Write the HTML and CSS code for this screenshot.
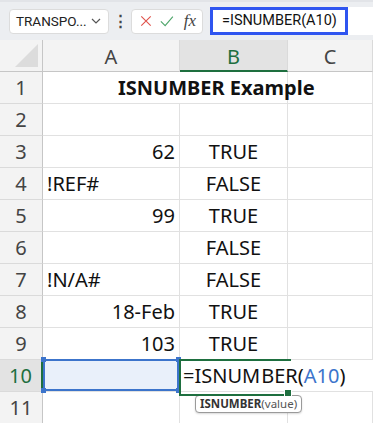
FILE: index.html
```html
<!DOCTYPE html>
<html lang="en">
<head>
  <meta charset="UTF-8" />
  <title>ISNUMBER Example</title>
  <link rel="stylesheet" href="styles.css">
</head>
<body>
  <div class="toolbar">
    <div class="name-box">
      <span>TRANSPO...</span>
      <svg class="chev" width="10" height="6" viewBox="0 0 10 6"><path d="M1 1l4 4 4-4" fill="none" stroke="#555" stroke-width="1.2"/></svg>
    </div>
    <span class="dots">&#8942;</span>
    <div class="fx-box">
      <svg width="14" height="14" viewBox="0 0 14 14"><path d="M1.5 1.5l11 11M12.5 1.5l-11 11" stroke="#e0524b" stroke-width="1.3" fill="none"/></svg>
      <svg width="16" height="14" viewBox="0 0 16 14"><path d="M1 7.5l5 5L15 2" stroke="#4ea56a" stroke-width="1.3" fill="none"/></svg>
      <span class="fx">fx</span>
    </div>
    <div class="formula">=ISNUMBER(A10)</div>
  </div>

  <div class="sheet">
    <div class="corner"><span class="tri"></span></div>
    <div class="col-head">A</div>
    <div class="col-head active">B</div>
    <div class="col-head">C</div>

    <div class="row-head">1</div>
    <div class="cell title">ISNUMBER Example</div>
    <div class="cell"></div>
    <div class="cell"></div>

    <div class="row-head">2</div>
    <div class="cell"></div><div class="cell"></div><div class="cell"></div>

    <div class="row-head">3</div>
    <div class="cell num">62</div><div class="cell mid">TRUE</div><div class="cell"></div>

    <div class="row-head">4</div>
    <div class="cell">!REF#</div><div class="cell mid">FALSE</div><div class="cell"></div>

    <div class="row-head">5</div>
    <div class="cell num">99</div><div class="cell mid">TRUE</div><div class="cell"></div>

    <div class="row-head">6</div>
    <div class="cell"></div><div class="cell mid">FALSE</div><div class="cell"></div>

    <div class="row-head">7</div>
    <div class="cell">!N/A#</div><div class="cell mid">FALSE</div><div class="cell"></div>

    <div class="row-head">8</div>
    <div class="cell num">18-Feb</div><div class="cell mid">TRUE</div><div class="cell"></div>

    <div class="row-head">9</div>
    <div class="cell num">103</div><div class="cell mid">TRUE</div><div class="cell"></div>

    <div class="row-head active">10</div>
    <div class="cell ref">
      <span class="knob tl"></span><span class="knob tr"></span>
      <span class="knob bl"></span><span class="knob br"></span>
    </div>
    <div class="cell editing">=ISNUM<span class="caret"></span>BER(<span class="arg">A10</span>)
      <div class="tip"><b>ISNUMBER</b>(value)</div>
    </div>
    <div class="cell no-left"></div>

    <div class="row-head">11</div>
    <div class="cell"></div><div class="cell"></div><div class="cell"></div>
  </div>
</body>
</html>
```

FILE: styles.css
```css
* { box-sizing: border-box; margin: 0; padding: 0; }
body {
  width: 373px;
  height: 423px;
  overflow: hidden;
  background: #fff;
  font-family: 'Noto Sans', 'Open Sans', Arial, sans-serif;
  color: #111;
}
.toolbar {
  height: 40px;
  background: #eceef1;
  border-top: 2px solid #e2e4e8;
  display: flex;
  align-items: center;
  padding: 0 0 0 9px;
  font-family: Roboto, 'Noto Sans', sans-serif;
}
.toolbar > * { flex-shrink: 0; }
.name-box {
  width: 100px;
  height: 25px;
  background: #fff;
  border: 1px solid #dcdcdc;
  border-radius: 4px;
  display: flex;
  align-items: center;
  justify-content: space-between;
  padding: 0 7px 0 6px;
  font-size: 13.5px;
  color: #222;
  white-space: nowrap;
}
.name-box svg { flex-shrink: 0; }
.dots {
  width: 22px;
  text-align: center;
  font-size: 15px;
  font-weight: 700;
  color: #444;
}
.fx-box {
  width: 72px;
  height: 25px;
  background: #fff;
  border: 1px solid #dcdcdc;
  border-radius: 4px;
  display: flex;
  align-items: center;
  gap: 8px;
  padding: 0 6px 0 8px;
}
.fx {
  font-family: 'Liberation Serif', serif;
  font-style: italic;
  font-size: 17px;
  color: #444;
  margin-left: 2px;
}
.formula {
  margin-left: 7px;
  width: 138px;
  height: 28px;
  border: 3px solid #2f55f0;
  background: #fff;
  font-size: 14.5px;
  line-height: 22px;
  padding-left: 9px;
  color: #111;
  white-space: nowrap;
}
.toolbar::after {
  content: '';
  flex: 1;
  height: 28px;
  background: #fff;
}
.sheet {
  display: grid;
  grid-template-columns: 43px 137px 108px 1fr;
  grid-auto-rows: 32px;
  font-size: 20px;
}
.corner, .col-head, .row-head {
  background: #f3f3f3;
  color: #444;
  display: flex;
  align-items: center;
  justify-content: center;
}
.corner {
  border-right: 1px solid #c6c6c6;
  border-bottom: 1px solid #c6c6c6;
  align-items: flex-end;
  justify-content: flex-end;
  padding: 0 4px 4px 0;
}
.tri {
  width: 0;
  height: 0;
  border-left: 23px solid transparent;
  border-bottom: 23px solid #dcdcdc;
}
.col-head {
  border-right: 1px solid #dadada;
  border-bottom: 1px solid #c6c6c6;
  padding-top: 2px;
}
.col-head.active {
  background: #e3e3e3;
  color: #1e6f3f;
  border-bottom: 2px solid #1e6f3f;
}
.row-head {
  border-right: 1px solid #c6c6c6;
  border-bottom: 1px solid #dadada;
}
.row-head.active {
  background: #e3e3e3;
  color: #1e6f3f;
  border-right: 2px solid #1e6f3f;
}
.cell {
  border-right: 1px solid #e1e1e1;
  border-bottom: 1px solid #e1e1e1;
  display: flex;
  align-items: center;
  padding: 0 4px;
  white-space: nowrap;
  position: relative;
}
.cell.num { justify-content: flex-end; }
.cell.mid { justify-content: center; }
.cell.title {
  font-weight: 700;
  overflow: visible;
  padding-left: 75px;
  z-index: 1;
  border-right: none;
}
.cell.ref {
  background: #e9f0fa;
}
.cell.ref::after {
  content: '';
  position: absolute;
  inset: -1px 0 0 0;
  border: 2px solid #3c74cb;
}
.knob {
  position: absolute;
  width: 5px;
  height: 5px;
  background: #3c74cb;
  z-index: 2;
}
.knob.tl { left: -2px; top: -3px; }
.knob.tr { right: -2px; top: -3px; }
.knob.bl { left: -2px; bottom: -2px; }
.knob.br { right: -2px; bottom: -2px; }
.cell.editing {
  overflow: visible;
  z-index: 2;
  padding-left: 3px;
  border-right: none;
}
.cell.editing::after {
  content: '';
  position: absolute;
  left: -1px;
  top: -1px;
  width: 110px;
  height: 33px;
  border-top: 2px solid #1e6f3f;
  border-bottom: 2px solid #1e6f3f;
  border-left: 2px solid #1e6f3f;
  pointer-events: none;
}
.cell.editing::before {
  content: '';
  position: absolute;
  left: 104px;
  top: 29px;
  width: 6px;
  height: 6px;
  background: #1e6f3f;
  border: 1px solid #fff;
  z-index: 3;
}
.caret {
  display: inline-block;
  width: 1px;
  height: 23px;
  background: #111;
  margin: 0 0.5px;
}
.arg { color: #3c74cb; }
.cell.no-left { border-right: none; }
.tip {
  position: absolute;
  left: 15px;
  top: 35px;
  height: 18px;
  padding: 0 4px;
  background: #fff;
  border: 1px solid #9a9a9a;
  border-radius: 4px;
  font-size: 11.5px;
  line-height: 16px;
  color: #555;
  box-shadow: 0 1px 2px rgba(0,0,0,0.15);
}
.tip b { color: #333; }
```
